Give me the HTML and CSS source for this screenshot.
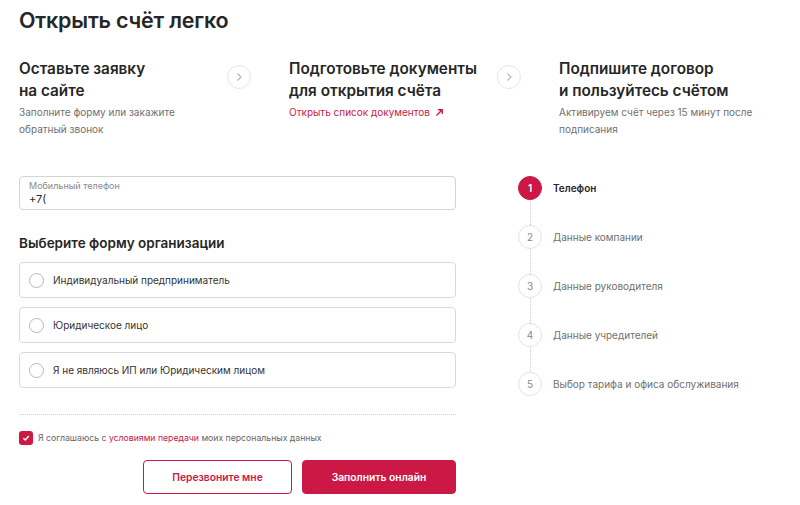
FILE: index.html
```html
<!DOCTYPE html>
<html lang="ru">
<head>
<meta charset="utf-8">
<link rel="stylesheet" href="styles.css">
</head>
<body>
<div class="page">
  <h1 class="title">Открыть счёт легко</h1>

  <div class="steps">
    <div class="step">
      <div class="step-text">
        <h2 class="step-title">Оставьте заявку<br>на сайте</h2>
        <p class="step-desc">Заполните форму или закажите<br>обратный звонок</p>
      </div>
      <div class="step-arrow"><svg width="10" height="10" viewBox="0 0 10 10"><path d="M3.5 1.5 L7 5 L3.5 8.5" fill="none" stroke="#b5b5b5" stroke-width="1.2"/></svg></div>
    </div>
    <div class="step">
      <div class="step-text">
        <h2 class="step-title">Подготовьте документы<br>для открытия счёта</h2>
        <a class="step-link">Открыть список документов <svg width="9" height="9" viewBox="0 0 9 9"><path d="M1.5 7.5 L7 2 M3 1.8 H7.2 V6" fill="none" stroke="#cc1844" stroke-width="1.4"/></svg></a>
      </div>
      <div class="step-arrow"><svg width="10" height="10" viewBox="0 0 10 10"><path d="M3.5 1.5 L7 5 L3.5 8.5" fill="none" stroke="#b5b5b5" stroke-width="1.2"/></svg></div>
    </div>
    <div class="step">
      <div class="step-text">
        <h2 class="step-title">Подпишите договор<br>и пользуйтесь счётом</h2>
        <p class="step-desc">Активируем счёт через 15 минут после<br>подписания</p>
      </div>
    </div>
  </div>

  <div class="main">
    <form class="form">
      <div class="field">
        <span class="field-label">Мобильный телефон</span>
        <span class="field-value">+7(</span>
      </div>

      <h3 class="org-title">Выберите форму организации</h3>
      <div class="options">
        <label class="option"><span class="radio"></span>Индивидуальный предприниматель</label>
        <label class="option"><span class="radio"></span>Юридическое лицо</label>
        <label class="option"><span class="radio"></span>Я не являюсь ИП или Юридическим лицом</label>
      </div>

      <div class="divider"></div>

      <div class="agree">
        <span class="check"><svg width="10" height="10" viewBox="0 0 10 10"><path d="M2.3 5.2 L4.2 7 L7.8 3" fill="none" stroke="#fff" stroke-width="1.4"/></svg></span>
        <span class="agree-text">Я соглашаюсь с <span class="red">условиями передачи</span> моих персональных данных</span>
      </div>

      <div class="buttons">
        <button type="button" class="btn btn-outline">Перезвоните мне</button>
        <button type="button" class="btn btn-fill">Заполнить онлайн</button>
      </div>
    </form>

    <ol class="progress">
      <li class="pstep active"><span class="num">1</span><span class="plabel">Телефон</span></li>
      <li class="pstep"><span class="num">2</span><span class="plabel">Данные компании</span></li>
      <li class="pstep"><span class="num">3</span><span class="plabel">Данные руководителя</span></li>
      <li class="pstep"><span class="num">4</span><span class="plabel">Данные учредителей</span></li>
      <li class="pstep"><span class="num">5</span><span class="plabel">Выбор тарифа и офиса обслуживания</span></li>
    </ol>
  </div>
</div>
</body>
</html>
```

FILE: styles.css
```css
* { box-sizing: border-box; }
html, body { margin: 0; padding: 0; background: #fff; }
body {
  font-family: Inter, "Noto Sans", "DejaVu Sans", sans-serif;
  color: #2b2b2b;
}
.page {
  padding: 5px 0 0 19px;
  width: 800px;
}
.title {
  margin: 0;
  font-size: 21.5px;
  font-weight: 600;
  line-height: 30px;
  letter-spacing: -0.2px;
  color: #262626;
}
.steps {
  display: flex;
  margin-top: 23px;
}
.step {
  display: flex;
  width: 270px;
  flex: none;
}
.step-text { width: 208px; }
.step-title {
  margin: 0;
  font-size: 15.3px;
  font-weight: 600;
  line-height: 22px;
  color: #262626;
}
.step-desc {
  margin: 2px 0 0;
  font-size: 10px;
  line-height: 17px;
  color: #707070;
}
.step-link {
  display: block;
  margin-top: 2px;
  font-size: 10px;
  line-height: 17px;
  color: #cc1844;
}
.step-link svg { margin-left: 2px; vertical-align: -1px; }
.step-arrow {
  width: 24px;
  height: 24px;
  margin-top: 7px;
  border: 1px solid #e6e6e6;
  border-radius: 50%;
  display: flex;
  align-items: center;
  justify-content: center;
}
.main {
  display: flex;
  margin-top: 38px;
}
.form {
  width: 437px;
  flex: none;
}
.field {
  height: 34px;
  border: 1px solid #d4d4d4;
  border-radius: 4px;
  padding: 3px 9px 0;
  display: flex;
  flex-direction: column;
}
.field-label {
  font-size: 9px;
  line-height: 12px;
  color: #8a8a8a;
}
.field-value {
  font-size: 11px;
  line-height: 15px;
  color: #2b2b2b;
}
.org-title {
  margin: 24px 0 0;
  font-size: 13.5px;
  font-weight: 600;
  line-height: 18px;
  color: #262626;
}
.options {
  display: flex;
  flex-direction: column;
  gap: 9px;
  margin-top: 10px;
}
.option {
  display: flex;
  align-items: center;
  height: 36px;
  border: 1px solid #dadada;
  border-radius: 4px;
  padding-left: 9px;
  font-size: 10px;
  color: #333;
}
.radio {
  width: 15px;
  height: 15px;
  border: 1px solid #b8b8b8;
  border-radius: 50%;
  margin-right: 9px;
  flex: none;
}
.divider {
  margin-top: 26px;
  border-top: 1px dotted #cfcfcf;
}
.agree {
  display: flex;
  align-items: center;
  margin-top: 16px;
}
.check {
  width: 14px;
  height: 14px;
  background: #cc1844;
  border-radius: 3px;
  display: flex;
  align-items: center;
  justify-content: center;
  margin-right: 5px;
}
.agree-text {
  font-size: 8.7px;
  color: #666;
}
.red { color: #cc1844; }
.buttons {
  display: flex;
  justify-content: flex-end;
  gap: 10px;
  margin-top: 15px;
}
.btn {
  height: 34px;
  border-radius: 4px;
  font-family: inherit;
  font-size: 10.3px;
  font-weight: 600;
  cursor: pointer;
}
.btn-outline {
  width: 149px;
  background: #fff;
  border: 1px solid #cc1844;
  color: #cc1844;
}
.btn-fill {
  width: 154px;
  background: #cc1844;
  border: 1px solid #cc1844;
  color: #fff;
}
.progress {
  list-style: none;
  margin: 0 0 0 62px;
  padding: 0;
  display: flex;
  flex-direction: column;
  gap: 25px;
}
.pstep {
  display: flex;
  align-items: center;
  position: relative;
}
.pstep + .pstep::before {
  content: "";
  position: absolute;
  left: 11.5px;
  top: -25px;
  height: 25px;
  border-left: 1px dotted #c8c8c8;
}
.num {
  width: 24px;
  height: 24px;
  border-radius: 50%;
  border: 1px solid #e3e3e3;
  display: flex;
  align-items: center;
  justify-content: center;
  font-size: 10px;
  color: #8a8a8a;
  margin-right: 11px;
  flex: none;
}
.plabel {
  font-size: 10px;
  color: #707070;
}
.active .num {
  background: #cc1844;
  border-color: #cc1844;
  color: #fff;
  font-weight: 600;
}
.active .plabel {
  color: #262626;
  font-weight: 600;
}
```
